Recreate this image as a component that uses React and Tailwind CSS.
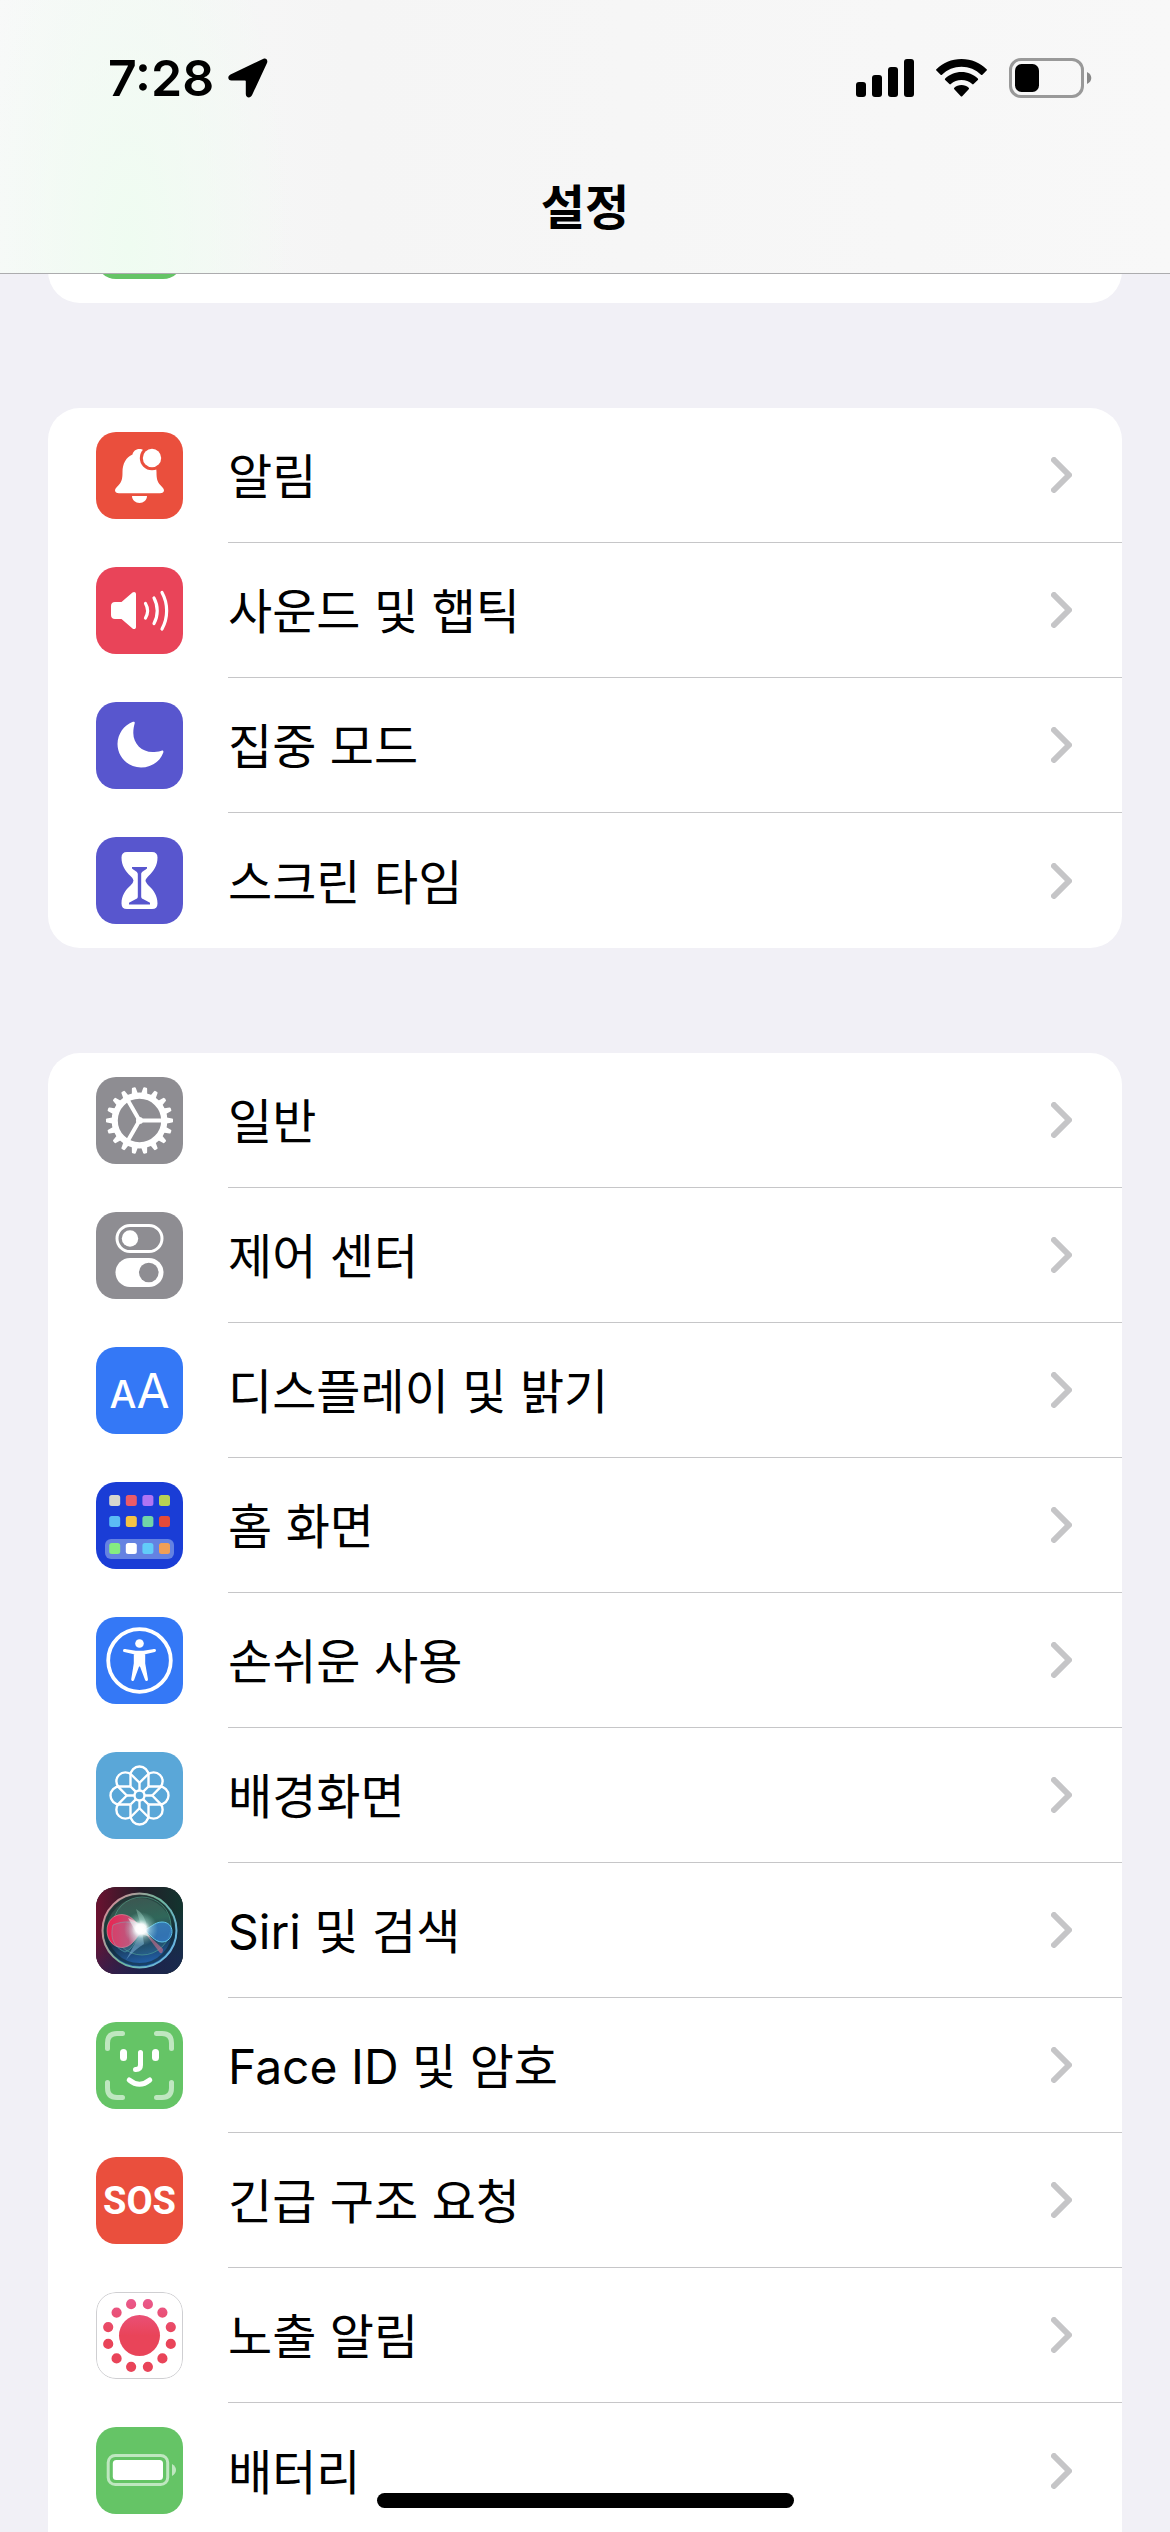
import React from 'react';

const gearTeeth = Array.from({ length: 18 }, (_, i) => i * 20);
const petals = Array.from({ length: 8 }, (_, i) => i * 45);
const dots = Array.from({ length: 12 }, (_, i) => 15 + i * 30);

const homeApps = [
    { y: 13, colors: ['#d6d6ce', '#ea5b68', '#af74f4', '#b7d153'] },
    { y: 34, colors: ['#5bbcf5', '#f5c344', '#71d6a8', '#e54a38'] },
    { y: 61, colors: ['#85ec81', '#ffffff', '#62ccf9', '#f09f56'] }
];

function Glyph({ children }) {
    return (
        <svg viewBox="0 0 87 87" className="block w-full h-full" fill="none" aria-hidden="true">
            {children}
        </svg>
    );
}

function BellIcon() {
    return (
        <Glyph>
            <path
                fill="#fff"
                d="M43.5 17c-4 0-6.2 2.4-7 5.5C30 25 26.5 32 26.5 40c0 7-.8 9.800-4 13.200-2.500 2.700-3.500 3.800-3.500 5.100 0 1.900 1.500 2.900 4 2.900h41c2.500 0 4-1 4-2.900 0-1.300-1-2.400-3.500-5.100-3.200-3.400-4-6.200-4-13.200C60.500 32 57 25 50.500 22.500c-.8-3.100-3-5.500-7-5.500z"
            />
            <circle cx="56" cy="26" r="12.200" fill="#ea4f3d" />
            <circle cx="56" cy="26" r="9.200" fill="#fff" />
            <path fill="#fff" d="M36 64h15c0 4-3.500 7-7.500 7S36 68 36 64z" />
        </Glyph>
    );
}

function SoundIcon() {
    return (
        <Glyph>
            <path
                fill="#fff"
                d="M19 35h6.500L36.500 25.500c1.500-1.200 3.500-.5 3.500 1.500v33c0 2-2 2.700-3.500 1.500L25.500 52H19c-2.500 0-4-1.500-4-4v-9c0-2.500 1.500-4 4-4z"
            />
            <g stroke="#fff" strokeWidth="3.200" strokeLinecap="round">
                <path d="M49.500 36.500c2.600 4.500 2.600 10 0 14.500" />
                <path d="M58 31c4.300 7.800 4.300 17.700 0 25.500" />
                <path d="M66 25.500c6.200 11.200 6.200 25.300 0 36.500" />
            </g>
        </Glyph>
    );
}

function MoonIcon() {
    return (
        <Glyph>
            <path
                fill="#fff"
                d="M37 19.800C28 23 21.500 32 21.500 42 21.500 55 32 65.500 45 65.500c10 0 19-5.500 22.300-15 .5-1.500-.5-2.200-1.800-1.800-3.500 1.200-6.500 1.300-9 1.300-10.500 0-19.200-8-19.200-19 0-4 .6-7 1.400-9.800.3-1.200-.5-1.800-1.700-1.400z"
            />
        </Glyph>
    );
}

function HourglassIcon() {
    return (
        <Glyph>
            <path
                fill="#fff"
                d="M31 15h25q5.500 0 5.500 5.500c0 8-4 14-9 18.500q-3 3-3 4.500t3 5c5 4.500 9 10 9 18q0 5.500-5.500 5.500H31q-5.500 0-5.500-5.500c0-8 4-13.500 9-18q3-3 3-5t-3-4.500c-5-4.500-9-10.500-9-18.500Q25.500 15 31 15z"
            />
            <path
                fill="#5856ce"
                d="M36 30h15v1.500c-2.500 2-5.800 3.300-5.800 5.500v22.500c0 1.500.8 2 1.800 2.600l7 3.600v1.800H33v-1.800l7-3.600c1-.6 1.800-1.100 1.800-2.600V37c0-2.200-3.300-3.500-5.800-5.500z"
            />
        </Glyph>
    );
}

function GearIcon() {
    return (
        <Glyph>
            <g transform="translate(43.5 43.5)">
                {gearTeeth.map((angle) => (
                    <path
                        key={angle}
                        transform={`rotate(${angle})`}
                        fill="#fff"
                        d="M26-3.200l6.600 1.200q.9.200.9 1v2q0 .8-.9 1L26 3.200z"
                    />
                ))}
                <circle r="24.800" stroke="#fff" strokeWidth="6.200" />
                <path d="M0 0H23M0 0L-11.500-20M0 0L-11.500 20" stroke="#fff" strokeWidth="4" />
                <circle r="3.500" fill="#fff" />
            </g>
        </Glyph>
    );
}

function TogglesIcon() {
    return (
        <Glyph>
            <rect x="21" y="13.500" width="45" height="26" rx="13" stroke="#fff" strokeWidth="3" />
            <circle cx="34" cy="26.500" r="8.200" fill="#fff" />
            <rect x="19.500" y="46" width="48" height="29" rx="14.500" fill="#fff" />
            <circle cx="52.800" cy="60.500" r="9.800" fill="#8e8d92" />
        </Glyph>
    );
}

function DisplayIcon() {
    return (
        <div className="flex h-full items-baseline justify-center pt-3 font-[Inter] text-white">
            <span className="text-[38px] leading-16 font-medium">A</span>
            <span className="text-5xl leading-16">A</span>
        </div>
    );
}

function HomeIcon() {
    return (
        <Glyph>
            <rect x="9" y="57" width="69" height="20" rx="6" fill="#6482e2" />
            {homeApps.map((row) =>
                row.colors.map((color, i) => (
                    <rect key={color} x={13.2 + i * 16.6} y={row.y} width="11" height="11" rx="2.500" fill={color} />
                ))
            )}
        </Glyph>
    );
}

function AccessibilityIcon() {
    return (
        <Glyph>
            <circle cx="43.500" cy="43.500" r="31.300" stroke="#fff" strokeWidth="3.800" />
            <circle cx="43.500" cy="26.500" r="4.300" fill="#fff" />
            <path
                fill="#fff"
                stroke="#fff"
                strokeWidth="3"
                strokeLinejoin="round"
                d="M28.500 33.500l11 1.800h8l11-1.800-10.800 2.600v10.400L50.500 62.500l-5.500-14.500h-3L36.700 62.500 39.300 46.500V36.100z"
            />
        </Glyph>
    );
}

function FlowerIcon() {
    return (
        <Glyph>
            <g transform="translate(43.5 43.5)" stroke="#fff" strokeWidth="2.400">
                {petals.map((angle) => (
                    <path
                        key={angle}
                        transform={`rotate(${angle})`}
                        d="M-9-9V-20A9 9 0 0 1 9-20V-9M0-12.700V-5"
                    />
                ))}
                <circle r="5" />
            </g>
        </Glyph>
    );
}

function SiriIcon() {
    return (
        <Glyph>
            <defs>
                <linearGradient id="siriBack" x1="0" y1="0" x2="1" y2="0">
                    <stop offset="0" stopColor="#6b1230" />
                    <stop offset="0.500" stopColor="#241c28" />
                    <stop offset="1" stopColor="#12352f" />
                </linearGradient>
                <linearGradient id="siriFloor" x1="0" y1="0" x2="0.300" y2="1">
                    <stop offset="0.500" stopColor="#1a2a6b" stopOpacity="0" />
                    <stop offset="1" stopColor="#1c2460" stopOpacity="0.600" />
                </linearGradient>
                <linearGradient id="siriOrb" x1="0.300" y1="0" x2="0.500" y2="1">
                    <stop offset="0" stopColor="#3a4443" />
                    <stop offset="0.400" stopColor="#2a5a50" />
                    <stop offset="0.650" stopColor="#17354f" />
                    <stop offset="1" stopColor="#2466b4" />
                </linearGradient>
                <linearGradient id="siriRing" x1="0" y1="0.200" x2="1" y2="0.800">
                    <stop offset="0" stopColor="#d98a98" />
                    <stop offset="0.500" stopColor="#6fb59b" />
                    <stop offset="1" stopColor="#69b7ea" />
                </linearGradient>
                <linearGradient id="siriPink" x1="0" y1="0" x2="1" y2="0">
                    <stop offset="0" stopColor="#ec2350" />
                    <stop offset="0.600" stopColor="#c8466e" />
                    <stop offset="1" stopColor="#f0c8dc" />
                </linearGradient>
                <radialGradient id="siriGlow">
                    <stop offset="0" stopColor="#fff" />
                    <stop offset="0.300" stopColor="#fff" stopOpacity="0.950" />
                    <stop offset="0.550" stopColor="#d6fff8" stopOpacity="0.400" />
                    <stop offset="1" stopColor="#9fe8dc" stopOpacity="0" />
                </radialGradient>
            </defs>
            <rect width="87" height="87" fill="url(#siriBack)" />
            <rect width="87" height="87" fill="url(#siriFloor)" />
            <circle cx="43.500" cy="43.500" r="37" fill="url(#siriOrb)" stroke="url(#siriRing)" strokeWidth="2" />
            <circle cx="43.500" cy="43.500" r="34" stroke="#0d2024" strokeOpacity="0.500" strokeWidth="3" />
            <circle cx="46" cy="39" r="29" fill="#5fc9a4" fillOpacity="0.120" stroke="#5fb89b" strokeOpacity="0.500" />
            <path
                d="M47 43C40 36 36 28 26 27.500c-9 0-15 7-15 16S17 60.500 26 60.500c9 0 14-9 21-17.500z"
                fill="url(#siriPink)"
                stroke="#f08ba0"
                strokeOpacity="0.600"
            />
            <path
                d="M47 42C40 34 28 33 17 38c-3 12 0 22 12 27 8-2 11-14 18-23z"
                fill="#8fb3d6"
                fillOpacity="0.150"
                stroke="#63d0d0"
                strokeOpacity="0.400"
            />
            <path
                d="M47 43c7-1 11-8 19-8 6 0 10 4 10 9.500S72 55 66 55c-8 0-12-9-19-12z"
                fill="#3b86d8"
                fillOpacity="0.700"
                stroke="#62c8ea"
            />
            <path d="M46 42L67 62q0 5-3 4z" fill="#d2708c" fillOpacity="0.600" />
            <path d="M46 43L30 73q8-10 18-16z" fill="#9fd8ff" fillOpacity="0.400" />
            <path d="M46 42L40 22q9 5 11 18z" fill="#c9fff0" fillOpacity="0.300" />
            <circle cx="45" cy="42" r="17" fill="url(#siriGlow)" />
            <path d="M32 31L47 38l7 12-14-5z" fill="#fff" fillOpacity="0.500" />
        </Glyph>
    );
}

function FaceIcon() {
    return (
        <Glyph>
            <g stroke="#bfe7c0" strokeWidth="5" strokeLinecap="round">
                <path d="M11.500 26.500V21q0-9.500 9.500-9.500h5.500" />
                <path d="M60.500 11.500H66q9.500 0 9.500 9.500v5.500" />
                <path d="M75.500 60.500V66q0 9.500-9.500 9.500h-5.500" />
                <path d="M26.500 75.500H21q-9.500 0-9.500-9.500v-5.500" />
            </g>
            <rect x="24" y="27" width="7" height="12" rx="3.500" fill="#fff" />
            <rect x="56" y="27" width="7" height="12" rx="3.500" fill="#fff" />
            <g stroke="#fff" strokeWidth="5" strokeLinecap="round">
                <path d="M44.500 30.500V43q0 4.500-4.500 4.500h-.5" />
                <path d="M33.200 58q10.300 8.500 20.600 0" />
            </g>
        </Glyph>
    );
}

function SosIcon() {
    return (
        <div className="flex h-full items-center justify-center font-[Roboto] text-[38px] leading-none font-bold text-white">
            SOS
        </div>
    );
}

function ExposureIcon() {
    return (
        <Glyph>
            <defs>
                <linearGradient id="exposure" gradientUnits="userSpaceOnUse" x1="0" y1="-37" x2="0" y2="37">
                    <stop offset="0" stopColor="#ea5a8d" />
                    <stop offset="0.500" stopColor="#e94459" />
                    <stop offset="1" stopColor="#e94459" />
                </linearGradient>
            </defs>
            <rect x="0.500" y="0.500" width="86" height="86" rx="19.500" fill="#fff" stroke="#cfcfd2" />
            <g transform="translate(43.5 43.5)" fill="url(#exposure)">
                <path d={dots.map((deg) => {
                    const x = Math.sin((deg * Math.PI) / 180) * 32.4;
                    const y = Math.cos((deg * Math.PI) / 180) * 32.4;
                    return `M${x - 5.1} ${y}a5.1 5.1 0 1 0 10.2 0a5.1 5.1 0 1 0-10.2 0z`;
                }).join('')} />
                <circle r="20.500" />
            </g>
        </Glyph>
    );
}

function BatteryIcon() {
    return (
        <Glyph>
            <rect x="12.200" y="28.500" width="59.500" height="29" rx="7" stroke="#bfe7c0" strokeWidth="3" />
            <rect x="16.800" y="33" width="50.200" height="20" rx="3.500" fill="#fff" />
            <path d="M76 37q4 2.500 4 6t-4 6z" fill="#bfe7c0" />
        </Glyph>
    );
}

const groups = [
    [
        { label: '알림', tile: 'bg-[#ea4f3d]', Icon: BellIcon },
        { label: '사운드 및 햅틱', tile: 'bg-[#e94459]', Icon: SoundIcon },
        { label: '집중 모드', tile: 'bg-[#5856ce]', Icon: MoonIcon },
        { label: '스크린 타임', tile: 'bg-[#5856ce]', Icon: HourglassIcon }
    ],
    [
        { label: '일반', tile: 'bg-[#8e8d92]', Icon: GearIcon },
        { label: '제어 센터', tile: 'bg-[#8e8d92]', Icon: TogglesIcon },
        { label: '디스플레이 및 밝기', tile: 'bg-[#3478f6]', Icon: DisplayIcon },
        { label: '홈 화면', tile: 'bg-[#1a3dd6]', Icon: HomeIcon },
        { label: '손쉬운 사용', tile: 'bg-[#3478f6]', Icon: AccessibilityIcon },
        { label: '배경화면', tile: 'bg-[#5aa7d8]', Icon: FlowerIcon },
        { label: 'Siri 및 검색', tile: 'bg-[#241c28]', Icon: SiriIcon },
        { label: 'Face ID 및 암호', tile: 'bg-[#65c466]', Icon: FaceIcon },
        { label: '긴급 구조 요청', tile: 'bg-[#ea4f3d]', Icon: SosIcon },
        { label: '노출 알림', tile: 'bg-white', Icon: ExposureIcon },
        { label: '배터리', tile: 'bg-[#65c466]', Icon: BatteryIcon }
    ]
];

function Row({ item, last }) {
    const { label, tile, Icon } = item;

    return (
        <li>
            <a href="#" className="flex h-[135px] items-center gap-[45px] pl-12">
                <span className={`block size-[87px] shrink-0 overflow-hidden rounded-[20px] ${tile}`}>
                    <Icon />
                </span>
                <span
                    className={`flex h-full flex-1 items-center justify-between pr-[50px] ${
                        last ? '' : 'border-b border-[#c6c6c8]'
                    }`}
                >
                    <span className="pt-1 text-5xl">{label}</span>
                    <svg width="21" height="36" viewBox="0 0 21 36" fill="none" aria-hidden="true">
                        <path
                            d="M3 3L18 18 3 33"
                            stroke="#c5c5c7"
                            strokeWidth="6"
                            strokeLinecap="round"
                            strokeLinejoin="round"
                        />
                    </svg>
                </span>
            </a>
        </li>
    );
}

function StatusBar() {
    return (
        <div className="flex h-[156px] items-center justify-between pr-[78px] pl-[108px]">
            <div className="flex items-center gap-3.5">
                <span className="text-[50px] leading-none font-semibold">7:28</span>
                <svg width="40" height="40" viewBox="0 0 40 40" aria-hidden="true">
                    <path d="M35.500.800L2.500 16.500C-.8 18.200-.3 22.500 3.500 22.500H17q.8 0 .8.8V36c0 4 4.700 4.600 6.300 1L39 5C40.200 2.200 38-.400 35.500.800z" />
                </svg>
            </div>
            <div className="flex items-center gap-[22px]">
                <svg width="58" height="38" viewBox="0 0 58 38" aria-hidden="true">
                    <rect x="0" y="23" width="10" height="15" rx="3" />
                    <rect x="16" y="16" width="10" height="22" rx="3" />
                    <rect x="32" y="8" width="10" height="30" rx="3" />
                    <rect x="48" y="0" width="10" height="38" rx="3" />
                </svg>
                <svg width="51" height="38" viewBox="0 0 51 38" aria-hidden="true">
                    <path d="M25.500 0C35.500 0 44.300 4 50.600 10.200q.7.700 0 1.400L46.400 15.700q-.7.600-1.400 0C39.800 10.700 33 7.800 25.500 7.800S11.200 10.700 6 15.700q-.7.600-1.400 0L.4 11.600q-.7-.7 0-1.400C6.700 4 15.500 0 25.500 0z" />
                    <path d="M25.500 13c6.300 0 12 2.400 16.300 6.500q.8.700 0 1.400l-4.200 4.200q-.7.600-1.400 0C33.300 22.500 29.600 21 25.500 21s-7.800 1.500-10.700 4.100q-.7.600-1.400 0l-4.200-4.200q-.8-.7 0-1.400C13.500 15.400 19.200 13 25.500 13z" />
                    <path d="M25.500 26c2.800 0 5.300 1 7.200 2.800q.8.700 0 1.400L26.200 37.200q-.7.700-1.400 0L18.300 30.200q-.8-.7 0-1.400C20.200 27 22.700 26 25.500 26z" />
                </svg>
                <svg width="83" height="40" viewBox="0 0 83 40" fill="none" aria-hidden="true">
                    <rect x="1.500" y="1.500" width="72" height="37" rx="10.500" stroke="#999" strokeWidth="3" />
                    <rect x="6" y="6" width="24" height="28" rx="6.500" fill="#000" />
                    <path d="M78 14q4.300 2.200 4.300 6T78 26z" fill="#888" />
                </svg>
            </div>
        </div>
    );
}

export default function App() {
    return (
        <div className="h-screen overflow-hidden bg-[#f1f0f6] font-[Inter,'Noto_Sans_CJK_KR',sans-serif] text-black">
            {/* Nav bar stays over the scrolled list */}
            <header className="fixed inset-x-0 top-0 z-10 h-[274px] border-b border-[#acacae] bg-linear-to-r from-[#f8f9f9] via-[#f5f5f5] via-30% to-[#f8f8f8]">
                <div className="h-full bg-radial-[14%_150%_at_11%_90%] from-[#effcf1] to-transparent">
                    <StatusBar />
                    <h1 className="text-center text-5xl leading-[104px] font-semibold">설정</h1>
                </div>
            </header>

            <main className="flex flex-col gap-[105px] px-12 pt-[168px]">
                {/* Tail of the group above, mostly under the header */}
                <div className="flex h-[135px] items-center rounded-b-[32px] bg-white pl-12">
                    <span className="size-[87px] rounded-[20px] bg-[#65c466]" />
                </div>

                {groups.map((items, index) => (
                    <ul
                        key={index}
                        className={`bg-white ${index === groups.length - 1 ? 'rounded-t-[32px]' : 'rounded-[32px]'}`}
                    >
                        {items.map((item, i) => (
                            <Row key={item.label} item={item} last={i === items.length - 1} />
                        ))}
                    </ul>
                ))}
            </main>

            {/* Home indicator */}
            <div className="fixed inset-x-0 bottom-6 z-10 flex justify-center">
                <div className="h-[15px] w-[417px] rounded-full bg-black" />
            </div>
        </div>
    );
}
